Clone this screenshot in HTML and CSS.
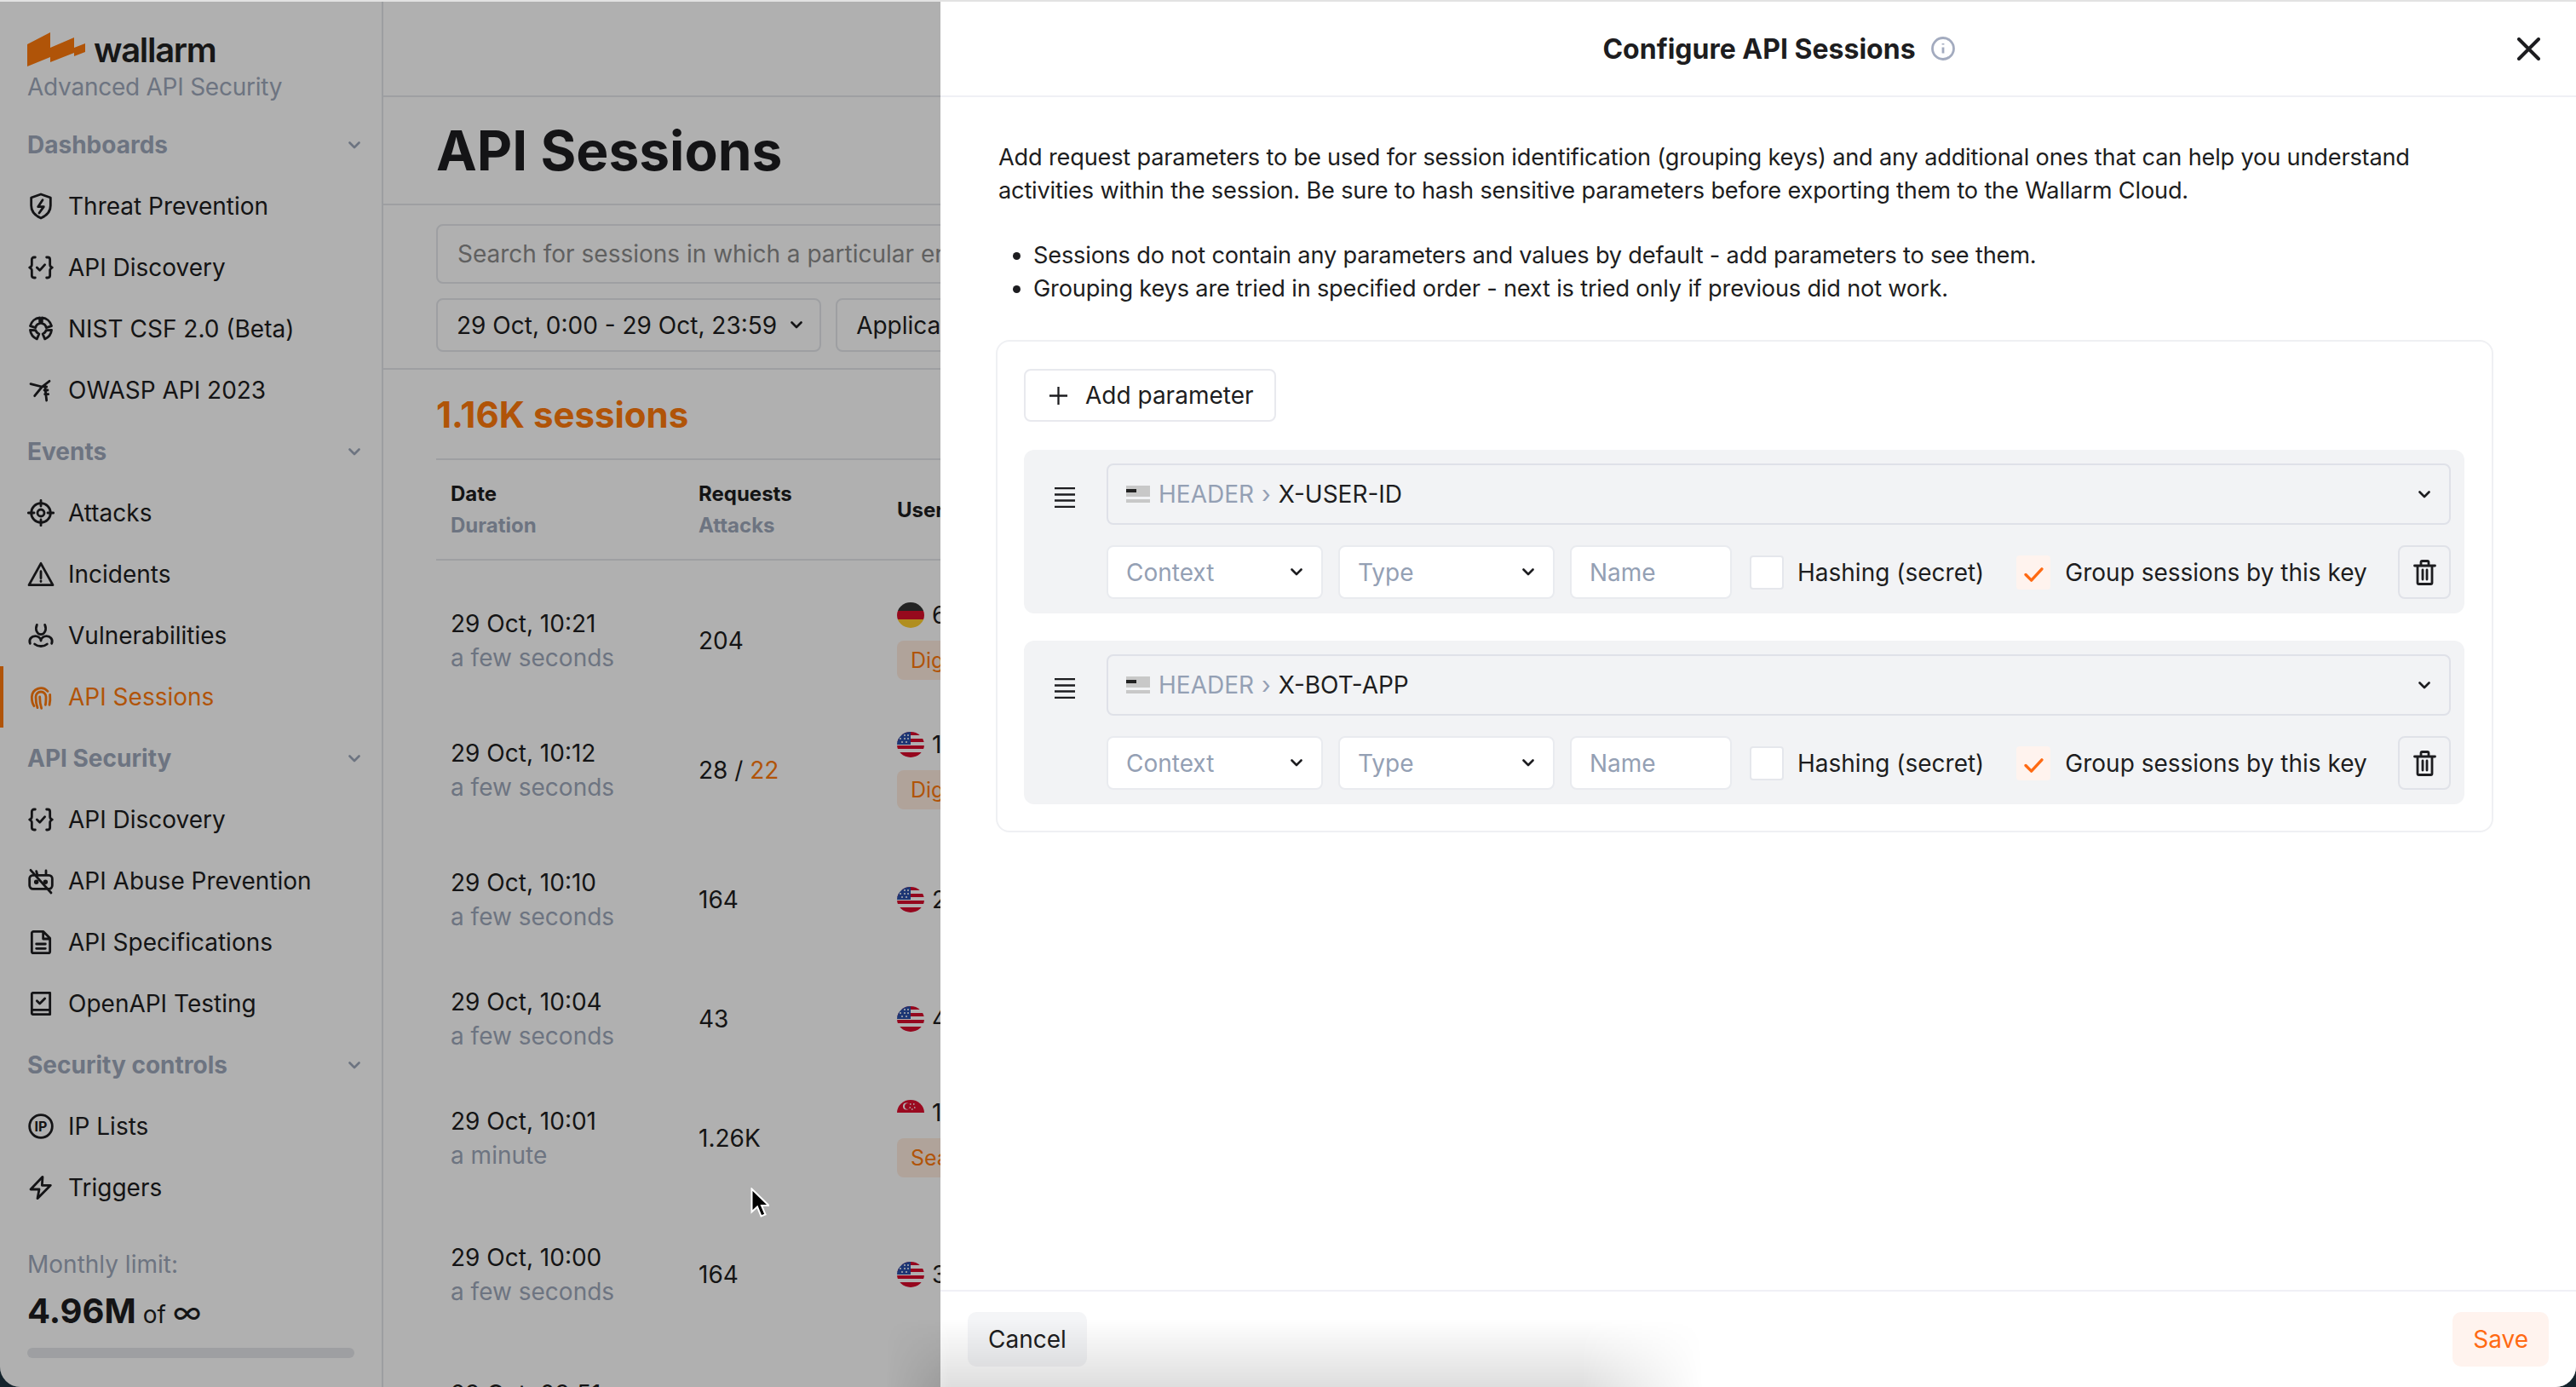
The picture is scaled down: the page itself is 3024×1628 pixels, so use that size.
FILE: index.html
```html
<!DOCTYPE html>
<html lang="en">
<head>
<meta charset="utf-8">
<title>API Sessions</title>
<link rel="stylesheet" href="styles.css">
</head>
<body>
<svg class="sprite" aria-hidden="true">
  <symbol id="chev" viewBox="0 0 14 9"><path d="M1.500 1.500L7 7l5.500-5.500" fill="none" stroke="currentColor" stroke-width="2.600" stroke-linecap="round" stroke-linejoin="round"/></symbol>
  <symbol id="braces" viewBox="0 0 24 24"><path d="M7 3H6a2 2 0 0 0-2 2v4.500c0 1.200-.8 2-2 2.500 1.200.5 2 1.300 2 2.500V19a2 2 0 0 0 2 2h1M17 3h1a2 2 0 0 1 2 2v4.500c0 1.200.8 2 2 2.500-1.200.5-2 1.300-2 2.500V19a2 2 0 0 1-2 2h-1M8.500 12l2.500 2.500 4.500-5"/></symbol>
  <symbol id="flag-us" viewBox="0 0 32 30">
    <rect width="32" height="30" fill="#fff"/>
    <rect y="0" width="32" height="4" fill="#d80b2c"/><rect y="8" width="32" height="4" fill="#d80b2c"/><rect y="16" width="32" height="4" fill="#d80b2c"/><rect y="24" width="32" height="6" fill="#d80b2c"/>
    <rect width="16" height="15" fill="#2a4fa8"/>
    <path d="M3 4h2M8 4h2M12 4h2M3 8h2M8 8h2M12 8h2M5 12h2M10 12h2" stroke="#fff" stroke-width="1.500"/>
  </symbol>
  <symbol id="flag-de" viewBox="0 0 32 30"><rect width="32" height="10" fill="#333"/><rect y="10" width="32" height="10" fill="#d90f2a"/><rect y="20" width="32" height="10" fill="#ffce2e"/></symbol>
  <symbol id="flag-sg" viewBox="0 0 32 30"><rect width="32" height="30" fill="#fff"/><rect width="32" height="15" fill="#e00f2f"/><circle cx="11" cy="7.500" r="4" fill="#fff"/><circle cx="12.500" cy="7.500" r="3.500" fill="#e00f2f"/><path d="M15 5h1.500M19 5h1.500M14.500 9h1.500M20 9h1.500M17 11h1.500" stroke="#fff" stroke-width="1.500"/></symbol>
  <symbol id="hdr" viewBox="0 0 28 20"><rect width="28" height="13" fill="#c8c8c8"/><rect y="16" width="28" height="4" fill="#c8c8c8"/><rect y="4" width="12" height="4" fill="#222"/></symbol>
  <symbol id="drag" viewBox="0 0 24 24"><path d="M0 1h24M0 8.500h24M0 15.500h24M0 23h24" stroke="currentColor" stroke-width="2.400" fill="none"/></symbol>
  <symbol id="trash" viewBox="0 0 27 30"><path d="M1.500 7h24M5 7v20a1.500 1.500 0 0 0 1.500 1.500h14A1.500 1.500 0 0 0 22 27V7M9 6V3a1.500 1.500 0 0 1 1.500-1.500h6A1.500 1.500 0 0 1 18 3v3M11 12v11M16 12v11" fill="none" stroke="currentColor" stroke-width="2.800" stroke-linecap="round"/></symbol>
  <symbol id="tick" viewBox="0 0 24 18"><path d="M2 9l7 7L22 2" fill="none" stroke="#ff6a13" stroke-width="3.600" stroke-linecap="round" stroke-linejoin="round"/></symbol>
</svg>

<div class="window">
  <aside class="sidebar">
    <div class="brand">
      <div class="logo">
        <svg class="logo-mark" viewBox="0 0 68 40"><path d="M0 14L27 0v18L55 6v12l13-5v10l-13 5v-4L27 35v-6L0 40z"/></svg>
        <span class="logo-word">wallarm</span>
      </div>
      <div class="brand-sub">Advanced API Security</div>
    </div>
    <nav>
      <div class="group">Dashboards<svg class="group-chev"><use href="#chev"/></svg></div>
      <a class="item"><svg class="ico" viewBox="0 0 24 24"><path d="M12 1.500l8.500 3v7c0 5-3.300 8.800-8.500 11-5.200-2.200-8.500-6-8.500-11v-7z"/><path d="M13.500 6.500L9.500 12.500h5L10.500 18"/></svg>Threat Prevention</a>
      <a class="item"><svg class="ico"><use href="#braces"/></svg>API Discovery</a>
      <a class="item"><svg class="ico" viewBox="0 0 24 24"><path d="M11 2.200A9.800 9.800 0 0 0 2.600 9.500L7.300 11A4.800 4.800 0 0 1 11 7.300zM13 2.200a9.800 9.800 0 0 1 8.400 7.300L16.700 11A4.800 4.800 0 0 0 13 7.300zM2.600 13a9.800 9.800 0 0 0 5.900 7.900l1.900-4.400a4.800 4.800 0 0 1-3-3.200zM21.400 13a9.800 9.800 0 0 1-5.900 7.900l-1.900-4.400a4.800 4.800 0 0 0 3-3.200z"/></svg>NIST CSF 2.0 (Beta)</a>
      <a class="item"><svg class="ico" viewBox="0 0 24 24"><path d="M3 6.500l10 2.500 6.500-5M13 9l-6.500 8M14 8.500l3 .5M15.500 8l1.500 13M15 12h3M15.500 15.500h3"/></svg>OWASP API 2023</a>
      <div class="group">Events<svg class="group-chev"><use href="#chev"/></svg></div>
      <a class="item"><svg class="ico" viewBox="0 0 24 24"><circle cx="12" cy="12" r="8.500"/><circle cx="12" cy="12" r="3"/><path d="M12 1v5M12 18v5M1 12h5M18 12h5"/></svg>Attacks</a>
      <a class="item"><svg class="ico" viewBox="0 0 24 24"><path d="M12 2.500L1.500 21.500h21zM12 9.500v6M12 18v.4"/></svg>Incidents</a>
      <a class="item"><svg class="ico" viewBox="0 0 24 24"><path d="M8.500 2.500c-2 4.500.5 8.500 3.500 8.500s5.500-4 3.500-8.500M2.500 19c-1.500-4 1.500-6.500 4.500-6.500 2.500 0 5 1.500 5 4M21.500 19c1.500-4-1.500-6.500-4.500-6.500-2.500 0-5 1.500-5 4M6.500 19.500c3 2.500 8 2.500 11 0"/></svg>Vulnerabilities</a>
      <a class="item active"><svg class="ico" viewBox="0 0 24 24"><path d="M6 20c-1.500-2-2-5-2-8a8 8 0 0 1 14-5M9 21.500c-1-2.500-1.500-5-1.500-9.500a4.500 4.500 0 0 1 9 0c0 3 0 5-.5 7M12.500 22c-1-3-1.500-6-1.500-10M20 10c.3 3 .2 6-.5 9"/></svg>API Sessions</a>
      <div class="group">API Security<svg class="group-chev"><use href="#chev"/></svg></div>
      <a class="item"><svg class="ico"><use href="#braces"/></svg>API Discovery</a>
      <a class="item"><svg class="ico" viewBox="0 0 24 24"><path d="M5 7h14a3 3 0 0 1 3 3v6a3 3 0 0 1-3 3H5a3 3 0 0 1-3-3v-6a3 3 0 0 1 3-3zM8 3.500L9 7M16.500 3v4M3 2.500l18 20"/><circle cx="8" cy="13" r="1"/><circle cx="16" cy="13" r="1"/></svg>API Abuse Prevention</a>
      <a class="item"><svg class="ico" viewBox="0 0 24 24"><path d="M4 4a1.500 1.500 0 0 1 1.500-1.500H14l6 6V20a1.500 1.500 0 0 1-1.500 1.500h-13A1.500 1.500 0 0 1 4 20zM14 3v6h6M8 13.500h8M8 17.500h8"/></svg>API Specifications</a>
      <a class="item"><svg class="ico" viewBox="0 0 24 24"><path d="M4 3.500a1 1 0 0 1 1-1h15v19H5a1 1 0 0 1-1-1zM4 17.500h16M8.500 9.500L11 12l4.500-4.500"/></svg>OpenAPI Testing</a>
      <div class="group">Security controls<svg class="group-chev"><use href="#chev"/></svg></div>
      <a class="item"><svg class="ico" viewBox="0 0 24 24"><circle cx="12" cy="12" r="10"/><text x="12" y="16.600" class="ip">IP</text></svg>IP Lists</a>
      <a class="item"><svg class="ico" viewBox="0 0 24 24"><path d="M13.500 2.500L3 13.500h7.500l-1.500 8 11.500-11.500H13z"/></svg>Triggers</a>
    </nav>
    <div class="limit">
      <div class="limit-label">Monthly limit:</div>
      <div class="limit-value"><b>4.96M</b> of <span class="inf">∞</span></div>
      <div class="limit-bar"></div>
    </div>
  </aside>

  <main class="main">
    <div class="topbar"></div>
    <header class="page-head"><h1>API Sessions</h1></header>
    <section class="filters">
      <div class="search">Search for sessions in which a particular error</div>
      <div class="filter-row">
        <div class="pill">29 Oct, 0:00 - 29 Oct, 23:59<svg class="pill-chev"><use href="#chev"/></svg></div>
        <div class="pill">Application</div>
      </div>
    </section>
    <section class="content">
      <h2>1.16K sessions</h2>
      <div class="row thead">
        <div><b>Date</b><b class="muted">Duration</b></div>
        <div><b>Requests</b><b class="muted">Attacks</b></div>
        <div><b>User</b></div>
      </div>
      <div class="tbody">
        <div class="row h152"><div>29 Oct, 10:21<span class="muted">a few seconds</span></div><div>204</div><div class="user"><div class="who"><svg class="flag"><use href="#flag-de"/></svg>6</div><span class="badge">Digital</span></div></div>
        <div class="row h152"><div>29 Oct, 10:12<span class="muted">a few seconds</span></div><div>28 / <em>22</em></div><div class="user"><div class="who"><svg class="flag"><use href="#flag-us"/></svg>1</div><span class="badge">Digital</span></div></div>
        <div class="row h152"><div>29 Oct, 10:10<span class="muted">a few seconds</span></div><div>164</div><div class="user"><div class="who"><svg class="flag"><use href="#flag-us"/></svg>2</div></div></div>
        <div class="row h128"><div>29 Oct, 10:04<span class="muted">a few seconds</span></div><div>43</div><div class="user"><div class="who"><svg class="flag"><use href="#flag-us"/></svg>4</div></div></div>
        <div class="row h152"><div>29 Oct, 10:01<span class="muted">a minute</span></div><div>1.26K</div><div class="user"><div class="who"><svg class="flag"><use href="#flag-sg"/></svg>1</div><span class="badge">Search</span></div></div>
        <div class="row h168"><div>29 Oct, 10:00<span class="muted">a few seconds</span></div><div>164</div><div class="user"><div class="who"><svg class="flag"><use href="#flag-us"/></svg>3</div></div></div>
        <div class="row h152"><div>29 Oct, 09:51<span class="muted">a few seconds</span></div><div>164</div><div class="user"></div></div>
      </div>
    </section>
  </main>

  <div class="backdrop"></div>

  <aside class="panel">
    <header class="panel-head">
      <div class="panel-title">Configure API Sessions
        <svg class="info" viewBox="0 0 28 28"><circle cx="14" cy="14" r="12.500"/><path d="M14 12.500v7M14 8v1.500"/></svg>
      </div>
      <svg class="close" viewBox="0 0 27 27"><path d="M2 2l23 23M25 2L2 25"/></svg>
    </header>
    <div class="panel-body">
      <div class="intro">
        <p>Add request parameters to be used for session identification (grouping keys) and any additional ones that can help you understand activities within the session. Be sure to hash sensitive parameters before exporting them to the Wallarm Cloud.</p>
        <ul>
          <li>Sessions do not contain any parameters and values by default - add parameters to see them.</li>
          <li>Grouping keys are tried in specified order - next is tried only if previous did not work.</li>
        </ul>
      </div>
      <div class="card">
        <button class="add"><svg class="plus" viewBox="0 0 24 24"><path d="M12 1v22M1 12h22"/></svg>Add parameter</button>
        <div class="param">
          <svg class="drag"><use href="#drag"/></svg>
          <div class="fields">
            <div class="path"><svg class="hdr"><use href="#hdr"/></svg><span class="ph">HEADER</span><span class="sep">›</span><span>X-USER-ID</span><svg class="sel-chev"><use href="#chev"/></svg></div>
            <div class="line">
              <div class="box sel ph">Context<svg class="sel-chev"><use href="#chev"/></svg></div>
              <div class="box sel ph">Type<svg class="sel-chev"><use href="#chev"/></svg></div>
              <div class="box name ph">Name</div>
              <span class="check"></span><span class="lbl lbl-hash">Hashing (secret)</span>
              <span class="check on"><svg class="tick"><use href="#tick"/></svg></span><span class="lbl">Group sessions by this key</span>
              <div class="trash"><svg class="trash-ico"><use href="#trash"/></svg></div>
            </div>
          </div>
        </div>
        <div class="param">
          <svg class="drag"><use href="#drag"/></svg>
          <div class="fields">
            <div class="path"><svg class="hdr"><use href="#hdr"/></svg><span class="ph">HEADER</span><span class="sep">›</span><span>X-BOT-APP</span><svg class="sel-chev"><use href="#chev"/></svg></div>
            <div class="line">
              <div class="box sel ph">Context<svg class="sel-chev"><use href="#chev"/></svg></div>
              <div class="box sel ph">Type<svg class="sel-chev"><use href="#chev"/></svg></div>
              <div class="box name ph">Name</div>
              <span class="check"></span><span class="lbl lbl-hash">Hashing (secret)</span>
              <span class="check on"><svg class="tick"><use href="#tick"/></svg></span><span class="lbl">Group sessions by this key</span>
              <div class="trash"><svg class="trash-ico"><use href="#trash"/></svg></div>
            </div>
          </div>
        </div>
      </div>
    </div>
    <footer class="panel-foot">
      <button class="btn cancel">Cancel</button>
      <button class="btn save">Save</button>
    </footer>
  </aside>

  <div class="dock-shadow"></div>
  <svg class="cursor" viewBox="0 0 22 36"><path d="M1.500 1.500v27l6.500-6 4.500 11 5-2-4.500-10.500h8.500z" fill="#000" stroke="#fff" stroke-width="2"/></svg>
</div>
</body>
</html>
```
FILE: styles.css
```css
* { box-sizing: border-box; }
html, body { margin: 0; height: 100%; overflow: hidden; background: #14232c; }
body { font-family: Inter, "Liberation Sans", sans-serif; font-size: 28px; color: #1d1d20; }
.sprite { position: absolute; width: 0; height: 0; }

.window {
  position: relative;
  display: flex;
  width: 3024px;
  height: 1628px;
  overflow: hidden;
  background: #fff;
  border-top: 2px solid #e2e2e2;
  border-radius: 0 0 24px 24px;
}

/* sidebar */
.sidebar { flex: 0 0 450px; border-right: 2px solid #e3e5ea; display: flex; flex-direction: column; }
.brand { height: 132px; padding: 36px 32px 0; }
.logo { display: flex; align-items: center; height: 40px; }
.logo-mark { width: 68px; height: 40px; fill: #ff7a0d; }
.logo-word { margin-left: 10px; font-size: 40px; font-weight: 600; letter-spacing: -1.300px; color: #222; }
.brand-sub { margin-top: 4px; line-height: 40px; letter-spacing: -.25px; color: #9ea9bb; }
.group, .item { display: flex; align-items: center; height: 72px; padding-left: 32px; }
.group { justify-content: space-between; padding-right: 25px; font-weight: 700; color: #9ea9bb; }
.group-chev { width: 14px; height: 9px; color: #9ea9bb; }
.item { color: #1d1d20; }
.item .ico {
  flex: none;
  width: 32px;
  height: 32px;
  margin-right: 16px;
  fill: none;
  stroke: currentColor;
  stroke-width: 2.100;
  stroke-linecap: round;
  stroke-linejoin: round;
}
.ip { font-size: 12px; font-weight: 700; text-anchor: middle; stroke: none; fill: currentColor; }
.item.active { color: #ff7a0d; box-shadow: inset 4px 0 0 #ff7a0d; }
.limit { margin-top: 34px; padding: 0 32px; }
.limit-label { line-height: 40px; color: #9ea9bb; }
.limit-value { margin-top: 9px; line-height: 52px; }
.limit-value b { font-size: 40px; font-weight: 700; }
.inf { font-size: 36px; line-height: 1; }
.limit-bar { height: 12px; margin-top: 13px; border-radius: 6px; background: #e5e7eb; }

/* main */
.main { flex: 1; min-width: 0; }
.topbar { height: 112px; border-bottom: 2px solid #e5e7eb; }
.page-head { display: flex; align-items: center; height: 127px; padding-left: 62px; border-bottom: 2px solid #e5e7eb; }
h1 { margin: 0; font-size: 64px; font-weight: 700; color: #1d1d20; }
.filters { height: 193px; padding: 22px 0 0 62px; border-bottom: 2px solid #e5e7eb; }
.search { display: flex; align-items: center; height: 70px; padding-left: 23px; border: 2px solid #e5e7eb; border-radius: 8px; color: #8c8c8c; white-space: nowrap; }
.filter-row { display: flex; gap: 17px; margin-top: 17px; }
.pill { display: flex; align-items: center; height: 63px; padding: 0 20px 0 22px; border: 2px solid #e5e7eb; border-radius: 8px; white-space: nowrap; }
.pill-chev { width: 14px; height: 9px; margin-left: 16px; }
.content { padding-left: 62px; }
h2 { display: flex; align-items: center; height: 104px; margin: 0; font-size: 42px; font-weight: 700; color: #ff7a0d; }
.row { display: grid; grid-template-columns: 291px 233px 1fr; align-items: center; padding-left: 17px; }
.row > div > span, .row > div > b { display: block; }
.thead { height: 120px; border-top: 2px solid #e5e7eb; border-bottom: 2px solid #e5e7eb; font-size: 24px; line-height: 37px; }
.thead b { font-weight: 700; }
.muted { color: #9ea9bb; }
.tbody { padding-top: 18px; line-height: 40px; }
.h128 { height: 128px; }
.h152 { height: 152px; }
.h168 { height: 168px; }
em { font-style: normal; color: #ff7a0d; }
.who { display: flex; align-items: center; gap: 9px; height: 32px; }
.flag { width: 32px; height: 30px; border-radius: 50%; }
.badge { display: block; width: 140px; height: 46px; margin-top: 14px; padding-left: 16px; font-size: 25px; line-height: 46px; border-radius: 8px; background: #ffece0; color: #ff7a0d; }

.backdrop { position: absolute; inset: 0; background: rgba(0, 0, 0, .31); }

/* drawer */
.panel { position: absolute; top: 0; bottom: 0; left: 1104px; width: 1920px; display: flex; flex-direction: column; background: #fff; }
.panel-head { flex: none; display: flex; align-items: center; height: 112px; padding: 0 42px 0 117px; border-bottom: 2px solid #eff0f5; }
.panel-title { flex: 1; display: flex; align-items: center; justify-content: center; gap: 18px; font-size: 32px; font-weight: 700; }
.info { width: 28px; height: 28px; fill: none; stroke: #a3abbf; stroke-width: 2.800; }
.close { width: 27px; height: 27px; fill: none; stroke: #1d1d20; stroke-width: 4; stroke-linecap: round; }
.panel-body { flex: 1; padding: 52px 97px 0 65px; }
.intro { padding-left: 3px; font-size: 27.200px; letter-spacing: -.19px; line-height: 38.500px; }
.intro p { margin: 0; }
.intro ul { margin: 38px 0 0; padding-left: 41px; }
.card { margin-top: 41px; padding: 32px 32px 31px 31px; border: 2px solid #eff0f3; border-radius: 16px; }
.add { display: flex; align-items: center; height: 62px; padding: 0 24px 0 27px; border: 2px solid #e8e9ee; border-radius: 8px; background: #fff; font: inherit; color: inherit; }
.plus { width: 23px; height: 23px; margin-right: 20px; fill: none; stroke: #1d1d20; stroke-width: 2.400; }
.param { display: flex; margin-top: 33px; padding: 16px 16px 17px 36px; height: 192px; border-radius: 12px; background: #f2f3f5; }
.param + .param { margin-top: 32px; }
.drag { flex: none; width: 24px; height: 24px; margin: 28px 37px 0 0; color: #1d1d20; }
.fields { flex: 1; min-width: 0; }
.path { display: flex; align-items: center; height: 72px; padding: 0 22px 0 21px; border: 2px solid #dfe1e8; border-radius: 8px; }
.hdr { width: 28px; height: 20px; margin-right: 10px; }
.ph { color: #94a0b4; }
.sep { margin: 0 9px; color: #94a0b4; }
.path .sel-chev { margin-left: auto; }
.sel-chev { width: 14px; height: 9px; color: #1d1d20; }
.line { display: flex; align-items: center; margin-top: 24px; height: 63px; }
.box { display: flex; align-items: center; height: 63px; padding: 0 21px; border: 2px solid #e9ebef; border-radius: 8px; background: #fff; }
.sel { width: 254px; justify-content: space-between; margin-right: 18px; padding-right: 22px; }
.name { width: 190px; margin-right: 21px; }
.check { display: flex; align-items: center; justify-content: center; flex: none; width: 40px; height: 40px; margin-right: 16px; border: 2px solid #e5e7ec; border-radius: 4px; background: #fff; }
.check.on { border: none; background: #fff3ee; margin-right: 17px; }
.tick { width: 23px; height: 17px; margin-top: 6px; }
.lbl-hash { margin-right: 38px; }
.trash { display: flex; align-items: center; justify-content: center; width: 62px; height: 63px; margin-left: auto; border: 2px solid #e0e2e8; border-radius: 8px; }
.trash-ico { width: 27px; height: 30px; color: #1d1d20; }
.panel-foot { flex: none; display: flex; justify-content: space-between; height: 114px; padding: 24px 32px 0; border-top: 2px solid #f0f0f6; }
.btn { height: 64px; padding: 0 24px; border: none; border-radius: 10px; font: inherit; }
.cancel { background: #f4f5f7; color: #1d1d20; }
.save { background: #fff3ee; color: #ff6a13; }

.dock-shadow {
  position: absolute;
  left: 1040px;
  bottom: 0;
  width: 960px;
  height: 80px;
  background: linear-gradient(to top, rgba(0, 0, 0, .13), rgba(0, 0, 0, 0));
  -webkit-mask-image: linear-gradient(to right, transparent 0, #000 8%, #000 85%, transparent 100%);
  mask-image: linear-gradient(to right, transparent 0, #000 8%, #000 85%, transparent 100%);
}
.cursor { position: absolute; left: 881px; top: 1392px; width: 22px; height: 36px; }
```
